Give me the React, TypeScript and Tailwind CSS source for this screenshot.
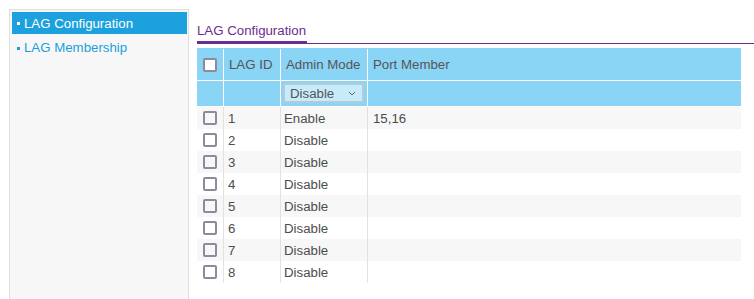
import React from "react";

const rows = [
  { id: "1", mode: "Enable", member: "15,16" },
  { id: "2", mode: "Disable", member: "" },
  { id: "3", mode: "Disable", member: "" },
  { id: "4", mode: "Disable", member: "" },
  { id: "5", mode: "Disable", member: "" },
  { id: "6", mode: "Disable", member: "" },
  { id: "7", mode: "Disable", member: "" },
  { id: "8", mode: "Disable", member: "" },
];

function Box({ white }: { white?: boolean }) {
  return (
    <span
      className={
        "block w-[14px] h-[14px] rounded-[2px] border-2 border-[#8d8a9b] " +
        (white ? "bg-white" : "bg-transparent")
      }
    />
  );
}

export default function App() {
  return (
    <div
      className="flex items-start bg-white w-[754px] h-[299px] overflow-hidden text-[13.25px]"
      style={{ fontFamily: '"Liberation Sans", Arial, Helvetica, sans-serif' }}
    >
      {/* Sidebar */}
      <div className="mt-[9px] ml-[9px] w-[180px] h-[300px] border border-[#dddddd] bg-[#f7f7f7] pt-[2px] pl-[2px] pr-[1px] flex flex-col gap-[2px] shrink-0">
        <div className="h-[22px] bg-[#1ca1de] text-white flex items-center pl-[5px] pt-[1px]">
          <span className="w-[3px] h-[3px] bg-white mr-[4px]" />
          <span>LAG Configuration</span>
        </div>
        <div className="h-[22px] text-[#1a9fdc] flex items-center pl-[5px] pt-[2px]">
          <span className="w-[3px] h-[3px] bg-[#1a9fdc] mr-[4px]" />
          <span>LAG Membership</span>
        </div>
      </div>

      {/* Main */}
      <div className="ml-[8px] flex-1 pt-[22px]">
        <div className="flex items-end">
          <div className="text-[#6b2c91] leading-[18px] pb-[1px] border-b-[3px] border-[#6b2c91] w-[110px]">
            LAG Configuration
          </div>
          <div className="flex-1 border-b border-[#6b2c91]" />
        </div>

        <div className="mt-[4px] w-[544px] text-[#4d4d4d]">
          {/* Header */}
          <div className="grid grid-cols-[27px_57px_87px_373px] h-[33px] pt-[1px] bg-[#8ad4f5] border-b border-white">
            <div className="border-r border-white flex items-center pl-[6px]">
              <Box white />
            </div>
            <div className="border-r border-white flex items-center pl-[5px] text-[#555555]">LAG ID</div>
            <div className="border-r border-white flex items-center pl-[5px] text-[#555555]">Admin Mode</div>
            <div className="flex items-center pl-[5px] text-[#555555]">Port Member</div>
          </div>
          {/* Filter row */}
          <div className="grid grid-cols-[27px_57px_87px_373px] h-[26px] bg-[#8ad4f5] border-b border-white">
            <div className="border-r border-white" />
            <div className="border-r border-white" />
            <div className="border-r border-white flex items-center pl-[2px] pb-[1px]">
              <div className="w-[81px] h-[20px] bg-[#c8ebfb] border-2 border-[#b2cbd6] flex items-center justify-between pl-[5px] pr-[6px] text-[#555555]">
                <span className="pt-[1px]">Disable</span>
                <svg width="8" height="5" viewBox="0 0 8 5" fill="none">
                  <path d="M1 1l3 3 3-3" stroke="#666" strokeWidth="1" />
                </svg>
              </div>
            </div>
            <div />
          </div>
          {/* Data rows */}
          {rows.map((r, i) => (
            <div
              key={r.id}
              className={
                "grid grid-cols-[27px_57px_87px_373px] h-[22px] " +
                (i % 2 === 0 ? "bg-[#f7f7f7]" : "bg-white")
              }
            >
              <div className="border-r border-[#e2e2e2] flex items-center pl-[6px]">
                <Box />
              </div>
              <div className="border-r border-[#e2e2e2] flex items-center pl-[4px] pt-[1px]">{r.id}</div>
              <div className="border-r border-[#e2e2e2] flex items-center pl-[3px] pt-[1px]">{r.mode}</div>
              <div className="flex items-center pl-[5px] pt-[1px]">{r.member}</div>
            </div>
          ))}
        </div>
      </div>
    </div>
  );
}
